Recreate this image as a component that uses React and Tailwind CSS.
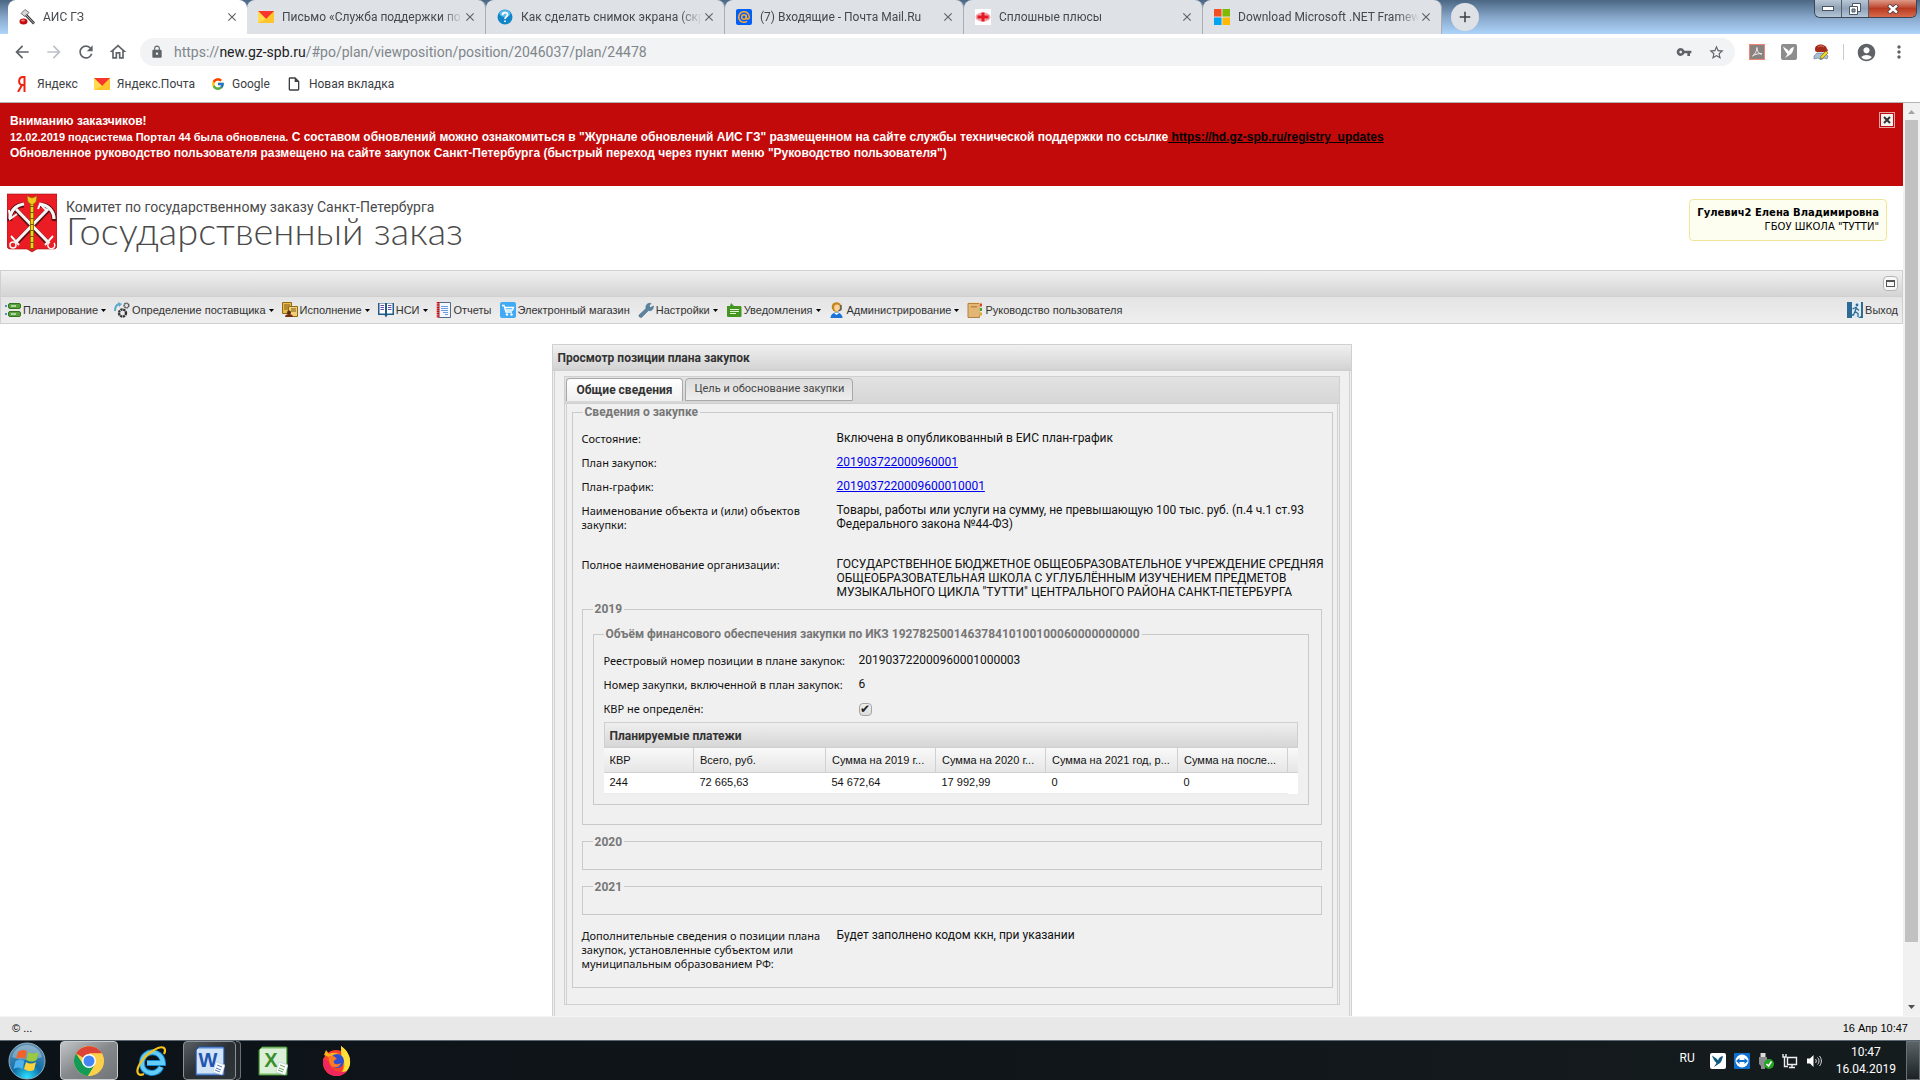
import React from 'react';
import {
    MdAccountCircle,
    MdAdd,
    MdArrowBack,
    MdArrowForward,
    MdClose,
    MdLock,
    MdMoreVert,
    MdOutlineHome,
    MdOutlineInsertDriveFile,
    MdRefresh,
    MdStarBorder,
    MdVpnKey,
} from 'react-icons/md';
import { FcGoogle } from 'react-icons/fc';

/* ---------- site icons ---------- */

const GavelIcon = () => (
    <svg viewBox="0 0 16 16" className="size-4">
        <path d="M6 .5l4 3-4 4-4-3z" fill="#d8d8d8" stroke="#777" />
        <path d="M7 6l8 8.500" stroke="#333" strokeWidth="2.600" />
        <path d="M7 6l8 8.500" stroke="#bbb" strokeWidth="1" />
        <ellipse cx="4.500" cy="12.500" rx="4" ry="3" fill="#c40d0d" />
        <ellipse cx="4" cy="11.500" rx="2" ry="1" fill="#f07a7a" />
    </svg>
);

const YandexMailIcon = () => (
    <svg viewBox="0 0 16 16" className="size-4">
        <path d="M0 2h16v12H0z" fill="#fdc52b" />
        <path d="M0 2h16L8 10z" fill="#f7352c" />
        <path d="M0 14V2l8 8z" fill="#ffdb4d" />
    </svg>
);

const QuestionIcon = () => (
    <svg viewBox="0 0 16 16" className="size-4">
        <circle cx="8" cy="8" r="7.500" fill="#1285c9" />
        <ellipse cx="8" cy="4.500" rx="5.500" ry="3.500" fill="#5fbcec" />
        <path d="M5.500 6.200c0-3.600 5-3.200 5-.4C10.500 8 8 7.800 8 10M8 11.500v1.600" stroke="#fff" strokeWidth="1.700" fill="none" />
    </svg>
);

const MailRuIcon = () => (
    <svg viewBox="0 0 16 16" className="size-4">
        <rect width="16" height="16" rx="2" fill="#005ff9" />
        <g fill="none" stroke="#ffa930" strokeWidth="1.500">
            <circle cx="8" cy="8" r="2.300" />
            <path d="M10.300 6v2.500c0 2 3 2 3-.5a5.300 5.300 0 1 0-2.300 4.400" />
        </g>
    </svg>
);

const PlusesIcon = () => (
    <svg viewBox="0 0 16 16" className="size-4">
        <rect width="16" height="16" fill="#fff" />
        <ellipse cx="8" cy="8" rx="7.500" ry="4.500" fill="#f3a0a6" />
        <path d="M6.500 3.500h3v3h4v3h-4v3h-3v-3h-4v-3h4z" fill="#e31b26" />
    </svg>
);

const MicrosoftIcon = () => (
    <svg viewBox="0 0 16 16" className="size-4">
        <path d="M0 0h7.500v7.500H0z" fill="#f25022" />
        <path d="M8.500 0H16v7.500H8.500z" fill="#7fba00" />
        <path d="M0 8.500h7.500V16H0z" fill="#00a4ef" />
        <path d="M8.500 8.500H16V16H8.500z" fill="#ffb900" />
    </svg>
);

const YandexIcon = () => (
    <svg viewBox="0 0 16 16" className="size-4">
        <path d="M10.500 16V1H9C4 1 4 9 8 9h2.500M8 9l-4 7" fill="none" stroke="#f2230c" strokeWidth="2" />
    </svg>
);

/* ---------- extension icons ---------- */

const PdfIcon = () => (
    <svg viewBox="0 0 16 16" className="size-4">
        <rect x=".5" y=".5" width="15" height="15" fill="#8b8181" stroke="#ef8573" />
        <path d="M3.500 12c2-1 4.500-5 4.500-8.500 0 4 2 6.500 5 6.500-3-.8-6.500 0-9.500 2z" fill="none" stroke="#eee" />
    </svg>
);

const BirdIcon = ({ bg, fg }) => (
    <svg viewBox="0 0 16 16" className="size-4">
        <rect width="16" height="16" rx="2" fill={bg} />
        <path d="M2 2.500l5 3.500 1 1.500c.5-2.500 2.500-4 5-4.500-.8 4-2 7-4.500 8L4 14l2.500-4C4.500 8 3 5.500 2 2.500z" fill={fg} />
    </svg>
);

const SealIcon = () => (
    <svg viewBox="0 0 16 16" className="size-4">
        <path d="M1 12l3-3h8l3 3-1 3-3-1-3 2-3-2-4 1z" fill="#a9bfd8" stroke="#5a6e86" strokeWidth=".6" />
        <path d="M2 5c0-6 11-6 12 0l1 1-1 2H4C2.500 8 2 7 2 5z" fill="#a52a1a" />
        <path d="M5 3c2-1.500 4-1.500 6 0" stroke="#de7b62" fill="none" />
        <path d="M7 15l1-3 5-5 2 2-5 5z" fill="#f0d722" stroke="#66600c" strokeWidth=".6" />
    </svg>
);

/* ---------- menu icons ---------- */

const PlanIcon = () => (
    <svg viewBox="0 0 16 16" className="size-4">
        <path d="M0 3h2v2H0zM0 11h2v2H0z" fill="#4d93bf" />
        <rect x="3.500" y="1.500" width="12" height="5" rx="1.500" fill="#58a03c" stroke="#35741f" />
        <rect x="3.500" y="9.500" width="12" height="5" rx="1.500" fill="#58a03c" stroke="#35741f" />
        <path d="M6 4h5M6 12h5" stroke="#cfe8c4" strokeWidth="1.500" />
    </svg>
);

const GearsIcon = () => (
    <svg viewBox="0 0 16 16" className="size-4">
        <path d="M1 9c0-4 1-6 4-7" fill="none" stroke="#5aa9cf" strokeWidth="2" />
        <path d="M4 0l4 2-3 3z" fill="#5aa9cf" />
        <circle cx="8.500" cy="11" r="3.500" fill="none" stroke="#333" strokeWidth="2.400" strokeDasharray="2.200 .6" />
        <circle cx="12.500" cy="3.500" r="2.300" fill="none" stroke="#555" strokeWidth="1.600" strokeDasharray="1.500 .4" />
    </svg>
);

const ExecutionIcon = () => (
    <svg viewBox="0 0 16 16" className="size-4">
        <path d="M.5.500h9v11h-9z" fill="#e9bb4c" stroke="#926a17" />
        <path d="M6.500 4.500h9v10h-9z" fill="#f0cf78" stroke="#926a17" />
        <path d="M2 3h6M2 5h4M2 7h4M9 7h5M9 9h5" stroke="#7b5a17" />
        <circle cx="7" cy="10.500" r="2" fill="#5c2d12" />
        <path d="M3 15c0-4 8-4 8 0z" fill="#742f12" />
    </svg>
);

const BookIcon = () => (
    <svg viewBox="0 0 16 16" className="size-4">
        <path d="M0 1h16v12H9.500L8 15.500 6.500 13H0z" fill="#1e5c86" />
        <path d="M1.500 1.500H7v10H1.500zM9 1.500h5.500v10H9z" fill="#fff" />
        <path d="M2.500 3.500h3.500M2.500 5.500h3.500M2.500 7.500h3.500M10 3.500h3.500M10 5.500h3.500M10 7.500h3.500" stroke="#6848a8" />
    </svg>
);

const ReportIcon = () => (
    <svg viewBox="0 0 16 16" className="size-4">
        <path d="M3 .5h11.500v15H3z" fill="#f3f8ff" stroke="#56688a" />
        <path d="M2 0v16" stroke="#e00000" strokeWidth="2.500" strokeDasharray="1.600 .6" />
        <path d="M5 4.500h7M5 6.500h7M5 8.500h7M7 10.500h5M9 12.500h3" stroke="#6d9be0" />
    </svg>
);

const CartIcon = () => (
    <svg viewBox="0 0 16 16" className="size-4">
        <rect width="16" height="16" rx="2" fill="#42aaf5" />
        <path d="M2 3.500h2l2 6.500h6M5 5.500h8.500L12.500 8H6" fill="none" stroke="#fff" strokeWidth="1.400" />
        <circle cx="7" cy="12.500" r="1.200" fill="#fff" />
        <circle cx="11.500" cy="12.500" r="1.200" fill="#fff" />
    </svg>
);

const WrenchIcon = () => (
    <svg viewBox="0 0 16 16" className="size-4">
        <path d="M1 13l7-6.500c-.8-3 1.500-6 5-5L11 4l1.500 1.500L15.500 4c0 3.500-2.500 5.500-5 4.500L3.500 15.500c-1.500.5-3-1-2.500-2.500z" fill="#5a83a3" stroke="#41647f" strokeWidth=".5" />
    </svg>
);

const NoticeIcon = () => (
    <svg viewBox="0 0 16 16" className="size-4">
        <path d="M1 4h3l1-3 3 3h6c1 0 1.500.5 1.500 1.500v8c0 1-.5 1.500-1.500 1.500H2.500C1.500 15 1 14.500 1 13.500z" fill="#459522" />
        <path d="M4 7.500h9M4 9.500h9M4 11.500h6" stroke="#e2f6d4" />
    </svg>
);

const AdminIcon = () => (
    <svg viewBox="0 0 16 16" className="size-4">
        <circle cx="7.500" cy="5" r="4.800" fill="#c5851e" />
        <ellipse cx="8" cy="5.700" rx="2.800" ry="3.300" fill="#f8d3a0" />
        <path d="M12 3v4.500L9.500 9" stroke="#555" fill="none" strokeWidth="1.400" />
        <path d="M1.500 16c0-7.500 12-7.500 12 0z" fill="#1c72d6" />
        <path d="M5 11l2.500 2 2.500-2z" fill="#fff" />
    </svg>
);

const GuideIcon = () => (
    <svg viewBox="0 0 16 16" className="size-4">
        <path d="M1 1.500h11.500v14H1z" fill="#e3b673" stroke="#b08345" />
        <path d="M2 .5h11v13" fill="none" stroke="#f3dcb4" />
        <path d="M4 4h6v1.500H4z" fill="#b98a4a" />
        <path d="M13 1.500h2v3h-2z" fill="#e0402c" />
        <path d="M13 6h2v3h-2z" fill="#42a52c" />
        <path d="M13 10.500h2v3h-2z" fill="#e8a72c" />
    </svg>
);

const ExitIcon = () => (
    <svg viewBox="0 0 16 16" className="size-4">
        <path d="M0 0h16v16H0z" fill="#2e6b94" />
        <path d="M5 0h9v14l-3 2H5z" fill="#dfeaf2" />
        <circle cx="10" cy="3" r="1.400" fill="#2e6b94" />
        <path d="M9.500 5L8 9.500l3 2v3.500M8 9.500L6.500 13H4M5.500 7l3-1.500 3.500 3" fill="none" stroke="#2e6b94" strokeWidth="1.300" />
    </svg>
);

const CoatOfArms = () => (
    <svg viewBox="0 0 50 60" className="h-15 w-[50px] shrink-0">
        <path d="M0 1h50v51c0 3-1 4-4 4H30l-5 3-5-3H4c-3 0-4-1-4-4z" fill="#ec1c24" stroke="#9d1016" strokeWidth=".6" />
        {/* dark underlay gives the anchors their shadow */}
        <g fill="none" stroke="#5b1013" strokeWidth="5">
            <path d="M9 50L41 17M41 50L9 17" />
            <path d="M3 28c-1-9 5-16 14-16M47 28c1-9-5-16-14-16" />
        </g>
        <g fill="none" stroke="#f6f6f6" strokeWidth="3.200">
            <path d="M9 49L41 16M41 49L9 16" />
            <path d="M3 26c0-8 6-14 14-15M47 26c0-8-6-14-14-15" />
            <path d="M2 17l1 9 7-5M31 16l2-5 6 6" strokeWidth="2" />
            <circle cx="6" cy="52" r="3" strokeWidth="1.500" />
            <path d="M47 50a3.500 3.500 0 1 1-4-1" strokeWidth="1.500" />
            <path d="M4 43l8 9M38 52l8-9" strokeWidth="2" />
        </g>
        <path d="M25 8v48" stroke="#7a5c00" strokeWidth="4" />
        <path d="M25 8v48" stroke="#f3d21b" strokeWidth="2.500" strokeDasharray="5 1" />
        <path d="M20 3l5 2 5-2-1 6-4 3-4-3z" fill="#f3c71b" stroke="#8a6a00" strokeWidth=".6" />
    </svg>
);

/* ---------- browser ---------- */

const tabs = [
    { title: 'АИС ГЗ', icon: <GavelIcon />, active: true },
    { title: 'Письмо «Служба поддержки по', icon: <YandexMailIcon /> },
    { title: 'Как сделать снимок экрана (скр', icon: <QuestionIcon /> },
    { title: '(7) Входящие - Почта Mail.Ru', icon: <MailRuIcon /> },
    { title: 'Сплошные плюсы', icon: <PlusesIcon /> },
    { title: 'Download Microsoft .NET Framew', icon: <MicrosoftIcon /> },
];

const BrowserTab = ({ title, icon, active }) => (
    <div
        className={`flex h-[34px] w-[239px] items-center rounded-t-lg pr-2 pl-[11px] ${
            active ? 'bg-white' : 'border-r border-[#a9adb3] bg-[#dee1e6]'
        }`}
    >
        {icon}
        <span className="ml-2 min-w-0 flex-1 overflow-hidden text-[12px] whitespace-nowrap text-[#45494d] [mask-image:linear-gradient(to_right,#000_88%,transparent)]">
            {title}
        </span>
        <button aria-label="Закрыть вкладку" className="text-[#5f6368]">
            <MdClose size={14} />
        </button>
    </div>
);

const WindowButtons = () => (
    <div className="mr-[3px] ml-auto flex h-[18px] overflow-hidden rounded-b-md border border-t-0 border-[#3a4656]">
        <button aria-label="Свернуть" className="flex w-[27px] items-center justify-center border-r border-[#4f5f70] bg-linear-to-b from-[#b9c7d5] via-[#8fa2b6] to-[#b4c6d8]">
            <span className="h-[5px] w-3 border border-[#4b5563] bg-white" />
        </button>
        <button aria-label="Развернуть" className="flex w-[27px] items-center justify-center border-r border-[#4f5f70] bg-linear-to-b from-[#b9c7d5] via-[#8fa2b6] to-[#b4c6d8]">
            <svg viewBox="0 0 12 12" className="size-3">
                <path d="M3.500.500h8v8h-8z" fill="#fff" stroke="#4b5563" />
                <path d="M.5 3.500h8v8h-8z" fill="#fff" stroke="#4b5563" />
                <path d="M3 6h3v3H3z" fill="#8fa2b6" stroke="#4b5563" />
            </svg>
        </button>
        <button aria-label="Закрыть" className="flex w-[47px] items-center justify-center bg-linear-to-b from-[#dd9a88] via-[#b93a22] to-[#d9694a]">
            <svg viewBox="0 0 12 10" className="h-[10px] w-3">
                <path d="M1.500 1l9 8M10.500 1l-9 8" stroke="#4b3b40" strokeWidth="4" />
                <path d="M2 1.500l8 7M10 1.500l-8 7" stroke="#fff" strokeWidth="2.400" />
            </svg>
        </button>
    </div>
);

const bookmarks = [
    { title: 'Яндекс', icon: <YandexIcon /> },
    { title: 'Яндекс.Почта', icon: <YandexMailIcon /> },
    { title: 'Google', icon: <FcGoogle size={14} /> },
    { title: 'Новая вкладка', icon: <MdOutlineInsertDriveFile size={16} /> },
];

const BrowserChrome = () => (
    <header className="shrink-0 border-b border-[#b3b3b3] bg-white font-[Roboto,'Noto_Sans',sans-serif]">
        <div className="flex h-[34px] items-start bg-linear-to-b from-[#4b6784] via-[#86a6c9] to-[#afd5fb] pl-2">
            {tabs.map((tab) => (
                <BrowserTab key={tab.title} {...tab} />
            ))}
            <button aria-label="Новая вкладка" className="mt-[3px] ml-[9px] flex size-7 items-center justify-center rounded-full bg-[#dee1e6] text-[#3c4043]">
                <MdAdd size={18} />
            </button>
            <WindowButtons />
        </div>
        <div className="flex h-9 items-center pr-[11px] pl-3 text-[#5f6368]">
            <div className="flex w-32 items-center gap-3">
                <button aria-label="Назад"><MdArrowBack size={20} /></button>
                <button aria-label="Вперёд" className="text-[#bdc1c6]"><MdArrowForward size={20} /></button>
                <button aria-label="Обновить"><MdRefresh size={20} /></button>
                <button aria-label="Домой"><MdOutlineHome size={20} /></button>
            </div>
            <div className="flex h-7 flex-1 items-center rounded-full bg-[#f1f3f4] px-[10px]">
                <MdLock size={14} className="shrink-0" />
                <div className="ml-[10px] flex-1 text-[14px] text-[#80868b]">
                    https://<span className="text-[#202124]">new.gz-spb.ru</span>/#po/plan/viewposition/position/2046037/plan/24478
                </div>
                <button aria-label="Пароли" className="mr-4"><MdVpnKey size={16} /></button>
                <button aria-label="В закладки"><MdStarBorder size={17} /></button>
            </div>
            <div className="ml-[14px] flex items-center gap-4">
                <PdfIcon />
                <BirdIcon bg="#8d8d8d" fg="#fff" />
                <SealIcon />
            </div>
            <span className="mr-3 ml-[14px] h-4 w-px bg-[#c8cbd0]" />
            <button aria-label="Профиль"><MdAccountCircle size={21} /></button>
            <button aria-label="Меню" className="ml-3"><MdMoreVert size={20} /></button>
        </div>
        <nav className="flex h-8 items-center gap-4 pb-1 pl-[14px] text-[12px] text-[#3c4043]">
            {bookmarks.map(({ title, icon }) => (
                <a key={title} href="#" className="flex items-center gap-[7px]">
                    {icon}
                    {title}
                </a>
            ))}
        </nav>
    </header>
);

/* ---------- page header ---------- */

const Banner = () => (
    <div className="flex h-[83px] items-start bg-[#c20a0a] pt-[9px] pr-2 pl-[10px] font-['Liberation_Sans',Arial,sans-serif] text-[12px] leading-[16px] font-bold text-white">
        <div className="flex-1 pt-px">
            <p>Вниманию заказчиков!</p>
            <p>
                <span className="text-[11px]">12.02.2019 подсистема Портал 44 была обновлена.</span> С составом обновлений можно ознакомиться в
                "Журнале обновлений АИС ГЗ" размещенном на сайте службы технической поддержки по ссылке
                <a href="#" className="text-black underline"> https://hd.gz-spb.ru/registry_updates</a>
            </p>
            <p>Обновленное руководство пользователя размещено на сайте закупок Санкт-Петербурга (быстрый переход через пункт меню "Руководство пользователя")</p>
        </div>
        <button aria-label="Закрыть" className="flex size-4 items-center justify-center border border-[#e7a0a0] bg-[#f3f3f3] text-[#333] outline-1 -outline-offset-2 outline-[#c20a0a]">
            <svg viewBox="0 0 8 8" className="size-2">
                <path d="M1 1l6 6M7 1L1 7" stroke="#333" strokeWidth="2" />
            </svg>
        </button>
    </div>
);

const SiteHeader = () => (
    <div className="flex h-[84px] items-start justify-between pt-[7px] pr-4 pl-[7px]">
        <div className="flex gap-[9px]">
            <CoatOfArms />
            <div className="pt-1 text-[#4a4a4a]">
                <p className="font-[Roboto,'Noto_Sans',sans-serif] text-[14px] leading-[20px]">
                    Комитет по государственному заказу Санкт-Петербурга
                </p>
                <h1 className="font-[Lato,'Noto_Sans',sans-serif] text-[38px] leading-[26px] font-light">Государственный заказ</h1>
            </div>
        </div>
        <div className="mt-[6px] h-[42px] rounded-sm border border-[#f0e69a] bg-[#fefef0] px-[7px] pt-[6px] text-right font-['DejaVu_Sans',Verdana,sans-serif] text-[10px] leading-[14px] text-black">
            <p className="font-bold">Гулевич2 Елена Владимировна</p>
            <p>ГБОУ ШКОЛА "ТУТТИ"</p>
        </div>
    </div>
);

const menu = [
    { title: 'Планирование', icon: <PlanIcon />, arrow: true },
    { title: 'Определение поставщика', icon: <GearsIcon />, arrow: true },
    { title: 'Исполнение', icon: <ExecutionIcon />, arrow: true },
    { title: 'НСИ', icon: <BookIcon />, arrow: true },
    { title: 'Отчеты', icon: <ReportIcon /> },
    { title: 'Электронный магазин', icon: <CartIcon /> },
    { title: 'Настройки', icon: <WrenchIcon />, arrow: true },
    { title: 'Уведомления', icon: <NoticeIcon />, arrow: true },
    { title: 'Администрирование', icon: <AdminIcon />, arrow: true },
    { title: 'Руководство пользователя', icon: <GuideIcon /> },
];

const MenuButton = ({ title, icon, arrow }) => (
    <button className="flex items-center gap-[2px]">
        {icon}
        {title}
        {arrow && (
            <svg viewBox="0 0 5 3" className="ml-px h-[3px] w-[5px]">
                <path d="M0 0h5L2.500 3z" fill="#000" />
            </svg>
        )}
    </button>
);

const MainMenu = () => (
    <div className="border-x border-[#d0d0d0]">
        <div className="flex h-[27px] items-center justify-end border-y border-[#d0d0d0] bg-linear-to-b from-[#f0f0f0] to-[#d4d4d4] pr-1">
            <button aria-label="Развернуть" className="flex size-[15px] items-center justify-center rounded border border-[#b5b5b5] bg-[#f7f7f7]">
                <span className="h-[7px] w-[9px] border border-t-2 border-[#555]" />
            </button>
        </div>
        <nav className="flex h-[27px] items-center gap-[8px] border-b border-[#d0d0d0] bg-linear-to-b from-[#e4e4e4] to-[#efefef] px-1 font-['Liberation_Sans',Arial,sans-serif] text-[11px] text-[#333]">
            {menu.map((item) => (
                <MenuButton key={item.title} {...item} />
            ))}
            <span className="flex-1" />
            <MenuButton title="Выход" icon={<ExitIcon />} />
        </nav>
    </div>
);

/* ---------- purchase position ---------- */

const FieldSet = ({ legend, className = '', children }) => (
    <fieldset className={`border border-[#c9c9c9] ${className}`}>
        <legend className="ml-[10px] px-[2px] text-[12px] leading-[14px] font-bold text-[#777]">{legend}</legend>
        {children}
    </fieldset>
);

const Row = ({ label, className = 'min-h-6', children }) => (
    <div className={`grid grid-cols-[255px_1fr] leading-[14px] whitespace-nowrap ${className}`}>
        <div className="pt-[6px] font-['Noto_Sans',Tahoma,sans-serif] text-[11px]">{label}</div>
        <div className="pt-[5px]">{children}</div>
    </div>
);

const columns = [
    { title: 'КВР', width: 'w-[90px]', value: '244' },
    { title: 'Всего, руб.', width: 'w-[132px]', value: '72 665,63' },
    { title: 'Сумма на 2019 г...', width: 'w-[110px]', value: '54 672,64' },
    { title: 'Сумма на 2020 г...', width: 'w-[110px]', value: '17 992,99' },
    { title: 'Сумма на 2021 год, р...', width: 'w-[132px]', value: '0' },
    { title: 'Сумма на после...', width: 'w-[110px]', value: '0' },
];

const PaymentsGrid = () => (
    <div className="mx-[10px] mt-[2px] bg-white">
        <div className="h-[26px] border border-[#cfcfcf] bg-linear-to-b from-[#efefef] to-[#d6d6d6] pl-[5px] text-[12px] leading-[26px] font-bold text-[#333]">
            Планируемые платежи
        </div>
        <table aria-label="Планируемые платежи" className="w-full table-fixed font-['Liberation_Sans',Arial,sans-serif] text-[11px]">
            <thead>
                <tr className="h-6 bg-linear-to-b from-[#f9f9f9] to-[#e6e6e6]">
                    {columns.map(({ title, width }) => (
                        <th key={title} className={`${width} border-r border-b border-[#d0d0d0] pl-[6px] text-left font-normal whitespace-nowrap`}>
                            {title}
                        </th>
                    ))}
                    <th className="border-b border-[#d0d0d0]" />
                </tr>
            </thead>
            <tbody>
                <tr className="h-[21px]">
                    {columns.map(({ title, value }) => (
                        <td key={title} className="border-b border-[#ededed] pl-[6px]">
                            {value}
                        </td>
                    ))}
                    <td />
                </tr>
            </tbody>
        </table>
    </div>
);

const PositionWindow = () => (
    <main className="mx-auto mt-5 w-[800px] border border-[#d0d0d0] bg-[#f0f0f0] font-[Roboto,'Noto_Sans',sans-serif] text-[12px] text-[#111]">
        <h2 className="h-[26px] border-b-2 border-[#d0d0d0] bg-linear-to-b from-[#f0f0f0] to-[#d4d4d4] pl-[5px] text-[12px] leading-[26px] font-bold text-[#333]">
            Просмотр позиции плана закупок
        </h2>
        <div className="mx-px border-x border-[#d0d0d0] px-[9px] pt-[5px] pb-6">
            <div className="border border-[#d0d0d0]">
                <div role="tablist" className="flex h-[27px] items-end gap-[2px] border-b border-[#d0d0d0] bg-linear-to-b from-[#e2e2e2] to-[#d6d6d6] pb-[2px] pl-px">
                    <button role="tab" aria-selected="true" className="h-[23px] rounded-t border border-b-0 border-[#a8a8a8] bg-linear-to-b from-white to-[#f0f0f0] px-[10px] font-bold text-[#333]">
                        Общие сведения
                    </button>
                    <button role="tab" aria-selected="false" className="h-[23px] rounded-t border border-[#a8a8a8] bg-linear-to-b from-[#dcdcdc] to-[#eeeeee] px-2 text-[11px] text-[#444]">
                        Цель и обоснование закупки
                    </button>
                </div>
                <div className="mx-px border-x border-[#d0d0d0] pt-px pr-1 pb-4 pl-[5px]">
                    <FieldSet legend="Сведения о закупке">
                        <div className="pt-[7px] pr-2 pb-4 pl-[9px]">
                            <Row label="Состояние:">Включена в опубликованный в ЕИС план-график</Row>
                            <Row label="План закупок:">
                                <a href="#" className="text-[#00e] underline">201903722000960001</a>
                            </Row>
                            <Row label="План-график:">
                                <a href="#" className="text-[#00e] underline">2019037220009600010001</a>
                            </Row>
                            <Row
                                label={<>Наименование объекта и (или) объектов<br />закупки:</>}
                                className="min-h-[54px]"
                            >
                                Товары, работы или услуги на сумму, не превышающую 100 тыс. руб. (п.4 ч.1 ст.93
                                <br />
                                Федерального закона №44-ФЗ)
                            </Row>
                            <Row label="Полное наименование организации:" className="min-h-[50px]">
                                ГОСУДАРСТВЕННОЕ БЮДЖЕТНОЕ ОБЩЕОБРАЗОВАТЕЛЬНОЕ УЧРЕЖДЕНИЕ СРЕДНЯЯ
                                <br />
                                ОБЩЕОБРАЗОВАТЕЛЬНАЯ ШКОЛА С УГЛУБЛЁННЫМ ИЗУЧЕНИЕМ ПРЕДМЕТОВ
                                <br />
                                МУЗЫКАЛЬНОГО ЦИКЛА "ТУТТИ" ЦЕНТРАЛЬНОГО РАЙОНА САНКТ-ПЕТЕРБУРГА
                            </Row>
                            <FieldSet legend="2019" className="mr-[2px]">
                                <div className="px-[10px] pt-[11px] pb-[19px]">
                                    <FieldSet legend="Объём финансового обеспечения закупки по ИКЗ 192782500146378410100100060000000000" className="mr-[2px]">
                                        <div className="px-[10px] pt-[7px]">
                                            <Row label="Реестровый номер позиции в плане закупок:">201903722000960001000003</Row>
                                            <Row label="Номер закупки, включенной в план закупок:">6</Row>
                                            <div className="grid h-6 grid-cols-[255px_1fr] leading-[14px]">
                                                <label htmlFor="kvr" className="pt-[6px] font-['Noto_Sans',Tahoma,sans-serif] text-[11px]">КВР не определён:</label>
                                                <input
                                                    id="kvr"
                                                    type="checkbox"
                                                    defaultChecked
                                                    className="mt-[7px] size-[13px] appearance-none rounded-sm border border-[#a5a5a5] bg-linear-to-b from-[#eee] to-[#ddd] text-center text-[12px] leading-[11px] text-[#222] checked:before:block checked:before:content-['✔']"
                                                />
                                            </div>
                                        </div>
                                        <PaymentsGrid />
                                        <div className="h-[10px]" />
                                    </FieldSet>
                                </div>
                            </FieldSet>
                            <FieldSet legend="2020" className="mt-[10px] mr-[2px] h-[35px]" />
                            <FieldSet legend="2021" className="mt-[10px] mr-[2px] mb-2 h-[35px]" />
                            <Row
                                label={
                                    <>
                                        Дополнительные сведения о позиции плана
                                        <br />
                                        закупок, установленные субъектом или
                                        <br />
                                        муниципальным образованием РФ:
                                    </>
                                }
                            >
                                Будет заполнено кодом ккн, при указании
                            </Row>
                        </div>
                    </FieldSet>
                </div>
            </div>
        </div>
    </main>
);

const ScrollBar = () => (
    <div className="flex w-[17px] shrink-0 flex-col items-center bg-[#f1f1f1]">
        <svg viewBox="0 0 17 17" className="size-[17px]">
            <path d="M5 11h7L8.500 7z" fill="#a3a3a3" />
        </svg>
        <div className="h-[90%] w-[13px] bg-[#c1c1c1]" />
        <svg viewBox="0 0 17 17" className="mt-auto size-[17px]">
            <path d="M5 6h7l-3.500 4z" fill="#505050" />
        </svg>
    </div>
);

/* ---------- taskbar ---------- */

const StartOrb = () => (
    <svg viewBox="0 0 38 38" className="size-[38px]">
        <defs>
            <radialGradient id="orb" cx=".5" cy=".95" r=".9">
                <stop offset="0" stopColor="#2ee0ff" />
                <stop offset=".45" stopColor="#0e6ea8" />
                <stop offset="1" stopColor="#5e8fb0" />
            </radialGradient>
        </defs>
        <circle cx="19" cy="19" r="18" fill="url(#orb)" stroke="#8fb1c5" />
        <path d="M4 15C8-1 30-1 34 15c-8 4-22 4-30 0z" fill="#fff" opacity=".3" />
        <path d="M10 10c4-3 6-2 9-1l-2 8c-3-2-6-2-9 0z" fill="#f2622a" />
        <path d="M20.500 10c3 2 6 2 10 0l-2 8c-3 2-7 2-10 0z" fill="#9bca3c" />
        <path d="M7.500 19c3-2 6-2 9 0l-2 8c-3-2-6-2-9 0z" fill="#4fb0ee" />
        <path d="M18 20c3 2 6 2 10 0l-2 8c-3 2-7 1-10-1z" fill="#fdd13a" />
    </svg>
);

const ChromeIcon = () => (
    <svg viewBox="0 0 30 30" className="size-[30px]">
        <circle cx="15" cy="15" r="15" fill="#fdd04a" />
        <path d="M15 15L2 7.500C8-2.500 23-2 28 7.500H15z" fill="#db4437" />
        <path d="M2 7.500C-4 18 4 29 14 30l7-11.500-6-3.500-6 3z" fill="#139c57" />
        <path d="M15 7.500h13C33 18 25 30 14 30l7.500-12z" fill="#fdd04a" />
        <circle cx="15" cy="15" r="7" fill="#fff" />
        <circle cx="15" cy="15" r="5.500" fill="#4486f5" />
    </svg>
);

const ExplorerIcon = () => (
    <svg viewBox="0 0 30 30" className="size-[30px]">
        <path d="M25 21c-3 9-20 8-19-5C7 3 26 3 27 17H11" fill="none" stroke="#1388d0" strokeWidth="6" />
        <path d="M25 21c-3 9-20 8-19-5C7 3 26 3 27 17H11" fill="none" stroke="#63cdf8" strokeWidth="4" />
        <path d="M8 28c-7 3-9-3-3-12S24-1 28 2c2 2 1 4 0 6" fill="none" stroke="#f6c31c" strokeWidth="2.200" />
    </svg>
);

const OfficeIcon = ({ letter, color, light }) => (
    <svg viewBox="0 0 30 30" className="size-[30px]">
        <path d="M4 1h24c1 0 1 1 1 1v27H1V4z" fill={light} stroke={color} />
        <path d="M2 3h26v24H2z" fill="#fff" opacity=".6" />
        <text x="13" y="21" textAnchor="middle" fontSize="20" fontWeight="bold" fontFamily="Liberation Sans, sans-serif" fill={color}>
            {letter}
        </text>
        <path d="M21 16l9 3-3 10-9-3z" fill="#fff" stroke="#b9c4d2" strokeWidth=".6" />
        <path d="M22 19l5 2M21 22l5 2M20 24l5 2" stroke={color} strokeWidth=".8" />
    </svg>
);

const FirefoxIcon = () => (
    <svg viewBox="0 0 30 30" className="size-[30px]">
        <circle cx="15" cy="17" r="13" fill="#f5412d" />
        <path d="M3 9l2-5 3 4c4-2 9-2 12 2l0-10c6 4 10 11 9 18-1 7-8 12-14 12 6-2 9-8 7-13z" fill="#ffb01f" />
        <path d="M20 0c6 4 10 11 9 18-1 5-4 9-8 10 4-8 3-13 0-17z" fill="#ffdf3a" />
        <path d="M2 12c-1 10 5 18 14 18 4 0 8-2 10-5-9 3-17-1-18-9z" fill="#f0265c" />
        <circle cx="16" cy="15" r="7" fill="#2e4fd1" />
        <path d="M8 10c3-1 6 0 8 3-3 1-4 2-3 4 2 2 5 1 7 0-1 5-9 6-11 1-1-3-2-5-1-8z" fill="#fd7a24" />
    </svg>
);

const TeamViewerIcon = () => (
    <svg viewBox="0 0 16 16" className="size-4">
        <rect width="16" height="16" rx="1" fill="#0e70d1" />
        <circle cx="8" cy="8" r="6.500" fill="#fff" />
        <path d="M2 8l3.500-3v2h5V5L14 8l-3.500 3V9h-5v2z" fill="#0e70d1" />
    </svg>
);

const UsbIcon = () => (
    <svg viewBox="0 0 16 16" className="size-4">
        <path d="M2.500 0h5v4h-5z" fill="#ddd" />
        <path d="M1 4h8v7l-2 2v3H3v-3l-2-2z" fill="#8b8d90" />
        <circle cx="11" cy="11" r="5" fill="#23a523" />
        <path d="M8.500 11l2 2 3-4.500" fill="none" stroke="#fff" strokeWidth="1.500" />
    </svg>
);

const NetworkIcon = () => (
    <svg viewBox="0 0 16 16" className="size-4">
        <path d="M5.500 4.500h9v7h-9zM7 14.500h6M10 12v2M2.500 5v8.500H6M1 1v3h3V1M2.500 4v1" fill="none" stroke="#eee" strokeWidth="1.400" />
    </svg>
);

const SpeakerIcon = () => (
    <svg viewBox="0 0 16 16" className="size-4">
        <path d="M1 5.500h3L7.500 2v12L4 10.500H1z" fill="#fff" />
        <path d="M9.500 6c1 1 1 3 0 4M11.500 4.500c2 2 2 5 0 7M13.500 3c2.500 3 2.500 7 0 10" fill="none" stroke="#ddd" />
    </svg>
);

const TaskBar = () => (
    <div className="flex h-10 shrink-0 items-stretch border-t border-[#5c6772] bg-linear-to-r from-[#0c1318] via-[#101519] to-[#151c1e] font-[Roboto,'Noto_Sans',sans-serif] text-[12px] text-white">
        <button aria-label="Пуск" className="ml-2 w-[38px]"><StartOrb /></button>
        <button aria-label="Google Chrome" className="ml-[14px] flex w-[58px] items-center justify-center rounded-sm border border-[#c9cdd0] bg-linear-to-br from-[#c3c5c7] via-[#85888b] to-[#727578]">
            <ChromeIcon />
        </button>
        <button aria-label="Internet Explorer" className="mr-[17px] ml-[18px]"><ExplorerIcon /></button>
        <button aria-label="Word" className="flex w-[53px] items-center justify-center rounded-sm border border-[#8b9094] bg-linear-to-br from-[#5a6065] via-[#2a2f34] to-[#30353a]">
            <OfficeIcon letter="W" color="#1f55b0" light="#8fb7ea" />
        </button>
        <span className="w-[5px] rounded-r-sm border border-l-0 border-[#6b7074] bg-[#23282c]" />
        <button aria-label="Excel" className="ml-[17px]"><OfficeIcon letter="X" color="#3c8f2e" light="#a8d79b" /></button>
        <button aria-label="Firefox" className="ml-[33px]"><FirefoxIcon /></button>
        <div className="ml-auto flex items-center gap-2">
            <span className="mr-[7px] mb-[6px]">RU</span>
            <BirdIcon bg="#ffffff" fg="#0d5a7d" />
            <TeamViewerIcon />
            <UsbIcon />
            <NetworkIcon />
            <SpeakerIcon />
        </div>
        <div className="mr-[10px] ml-[14px] text-center leading-[17px]">
            <p className="pt-[3px]">10:47</p>
            <p>16.04.2019</p>
        </div>
        <button aria-label="Показать рабочий стол" className="w-[14px] border border-[#6a7175] bg-linear-to-b from-[#5d6468] to-[#1c2225]" />
    </div>
);

export default function App() {
    return (
        <div className="flex h-screen flex-col overflow-hidden bg-white">
            <BrowserChrome />
            <div className="flex min-h-0 flex-1">
                <div className="min-w-0 flex-1 overflow-hidden">
                    <Banner />
                    <SiteHeader />
                    <MainMenu />
                    <PositionWindow />
                </div>
                <ScrollBar />
            </div>
            <footer className="flex h-6 shrink-0 items-center justify-between border-t border-[#f5f5f5] bg-[#e8e8e8] px-3 font-['Liberation_Sans',Arial,sans-serif] text-[11px] text-black">
                <span>© ...</span>
                <span>16 Апр 10:47</span>
            </footer>
            <TaskBar />
        </div>
    );
}
